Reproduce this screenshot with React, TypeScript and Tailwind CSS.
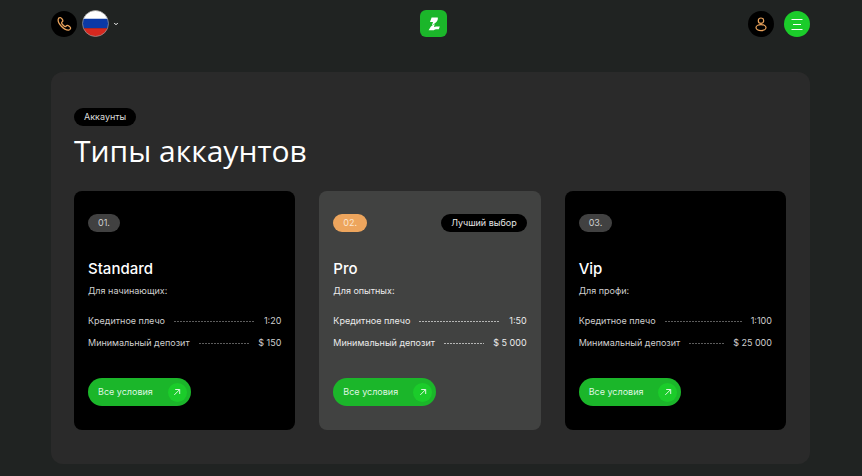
import { ChevronDown } from "lucide-react"

type Account = {
  number: string
  name: string
  audience: string
  leverage: string
  deposit: string
  best?: boolean
}

const accounts: Account[] = [
  {
    number: "01.",
    name: "Standard",
    audience: "Для начинающих:",
    leverage: "1:20",
    deposit: "$ 150",
  },
  {
    number: "02.",
    name: "Pro",
    audience: "Для опытных:",
    leverage: "1:50",
    deposit: "$ 5 000",
    best: true,
  },
  {
    number: "03.",
    name: "Vip",
    audience: "Для профи:",
    leverage: "1:100",
    deposit: "$ 25 000",
  },
]

const Header = () => (
  <header className="flex h-[47px] items-center justify-between">
    <div className="flex items-center gap-[5px]">
      <a
        href="#phone"
        aria-label="Позвонить"
        className="flex size-[26px] items-center justify-center rounded-full bg-black"
      >
        <svg
          viewBox="0 0 24 24"
          className="size-4 text-[#eda55d]"
          fill="none"
          stroke="currentColor"
          strokeWidth="1.9"
          strokeLinejoin="round"
        >
          <path d="M3.2 5.2C2.6 11 11.5 21.4 18.6 21.2c1.6 0 3.3-1.9 3.3-3.3 0-1.5-3.7-4-5.2-3.8-1.3.2-1.5 1.9-2.9 1.7-1.9-.3-5.2-3.8-5.4-5.5-.1-1.5 1.7-1.6 1.9-2.9C10.5 5.9 8 2.5 6.5 2.4 5 2.3 3.4 3.6 3.2 5.2z" />
        </svg>
      </a>
      <button aria-label="Язык" className="flex items-center gap-1">
        <svg viewBox="0 0 26 26" className="size-[27px]">
          <clipPath id="flag">
            <circle cx="13" cy="13" r="12.5" />
          </clipPath>
          <g clipPath="url(#flag)">
            <path fill="#fff" d="M0 0h26v9H0z" />
            <path fill="#0b39a6" d="M0 8.5h26v9H0z" />
            <path fill="#d6281f" d="M0 17.5h26V26H0z" />
          </g>
          <circle
            cx="13"
            cy="13"
            r="12.5"
            fill="none"
            stroke="#9a9a9a"
            strokeWidth="0.7"
          />
        </svg>
        <ChevronDown className="size-1.5 text-white" strokeWidth={4} />
      </button>
    </div>

    <a
      href="#home"
      aria-label="Главная"
      className="flex size-[27px] items-center justify-center rounded-md bg-[#1bb62a]"
    >
      <svg viewBox="0 0 16 16" className="size-4" fill="#fff">
        <path d="M5.600 1.500h6.200c.3 2.100-.3 3.300-1.700 4.700L5.800 9.800l1.200-3.800H4z" />
        <path d="M8.600 7.900 4.900 10.400 2.600 14.300h4.200c1.500 0 1.900-1.100 3.100-1.100h2.900l1-2.800h-3.200c-1.200 0-1.500.7-2.500.7z" />
      </svg>
    </a>

    <div className="flex items-center gap-2.5">
      <a
        href="#profile"
        aria-label="Профиль"
        className="flex size-[26px] items-center justify-center rounded-full bg-black"
      >
        <svg
          viewBox="0 0 16 16"
          className="size-4 text-[#eda55d]"
          fill="none"
          stroke="currentColor"
          strokeWidth="1.2"
        >
          <circle cx="8" cy="4.7" r="2.7" />
          <ellipse cx="8" cy="11.6" rx="5" ry="3" />
        </svg>
      </a>
      <button
        aria-label="Меню"
        className="flex size-[26px] items-center justify-center rounded-full bg-[#1bcc2a]"
      >
        <svg
          viewBox="0 0 14 14"
          className="size-3.5"
          stroke="#fff"
          strokeWidth="1"
        >
          <path d="M1.5 2.5h11M3 7.5h8M1.5 12.5h11" />
        </svg>
      </button>
    </div>
  </header>
)

const Row = ({
  label,
  value,
  best,
}: {
  label: string
  value: string
  best?: boolean
}) => (
  <div className="flex items-center gap-[9px]">
    <dt>{label}</dt>
    <span
      className={`h-px flex-1 ${
        best
          ? "bg-[repeating-linear-gradient(90deg,#b5b6b5_0_2px,transparent_2px_3px)]"
          : "bg-[repeating-linear-gradient(90deg,#5c5c5c_0_2px,transparent_2px_3px)]"
      }`}
    />
    <dd>{value}</dd>
  </div>
)

const AccountCard = ({ account }: { account: Account }) => {
  const { best } = account

  return (
    <article
      className={`rounded-lg px-3.5 pt-[23px] pb-6 ${best ? "bg-[#414241] text-[#ececec]" : "bg-black text-[#cfcfcf]"}`}
    >
      <div className="flex items-center justify-between text-[9px] leading-[18px]">
        <span
          className={`rounded-full px-2.5 ${best ? "bg-[#eda55d] text-[#fbe6cf]" : "bg-[#414141]"}`}
        >
          {account.number}
        </span>
        {best && (
          <span className="rounded-full bg-black px-2.5 text-[#e6e6e6]">
            Лучший выбор
          </span>
        )}
      </div>

      <h2 className="mt-[27px] text-[15px] leading-5 font-medium text-white">
        {account.name}
      </h2>
      <p className="mt-[5px] text-[9px] leading-3.5">{account.audience}</p>

      <dl className="mt-4 flex flex-col gap-2 text-[9px] leading-3.5">
        <Row label="Кредитное плечо" value={account.leverage} best={best} />
        <Row label="Минимальный депозит" value={account.deposit} best={best} />
      </dl>

      <a
        href="#terms"
        className="mt-7 flex h-7 w-fit items-center gap-[15px] rounded-full bg-[#1bb62a] pr-1 pl-2.5 text-[9px] text-[#dff7e1]"
      >
        Все условия
        <span className="flex size-[19px] items-center justify-center rounded-full bg-[#1bcc2a]">
          <svg
            viewBox="0 0 8 8"
            className="size-2"
            fill="none"
            stroke="currentColor"
            strokeWidth="1"
          >
            <path d="M1.3 6.9 6.5 1.7M2.2 1.5h4.5V6" />
          </svg>
        </span>
      </a>
    </article>
  )
}

const App = () => (
  <div className="min-h-screen bg-[#202322] pr-[52px] pb-3 pl-[51px] font-[Inter,sans-serif]">
    <Header />

    <main className="mt-[25px] rounded-xl bg-[#2a2a2a] pt-9 pr-6 pb-[34px] pl-[23px]">
      <span className="block w-fit rounded-full bg-black px-2.5 text-[9px] leading-[18px] text-[#dcdcdc]">
        Аккаунты
      </span>
      <h1 className="mt-[5px] font-['Open_Sans',sans-serif] text-[30px] leading-10 text-white">
        Типы аккаунтов
      </h1>

      <div className="mt-5 grid grid-cols-3 gap-6">
        {accounts.map((account) => (
          <AccountCard key={account.number} account={account} />
        ))}
      </div>
    </main>
  </div>
)

export default App
